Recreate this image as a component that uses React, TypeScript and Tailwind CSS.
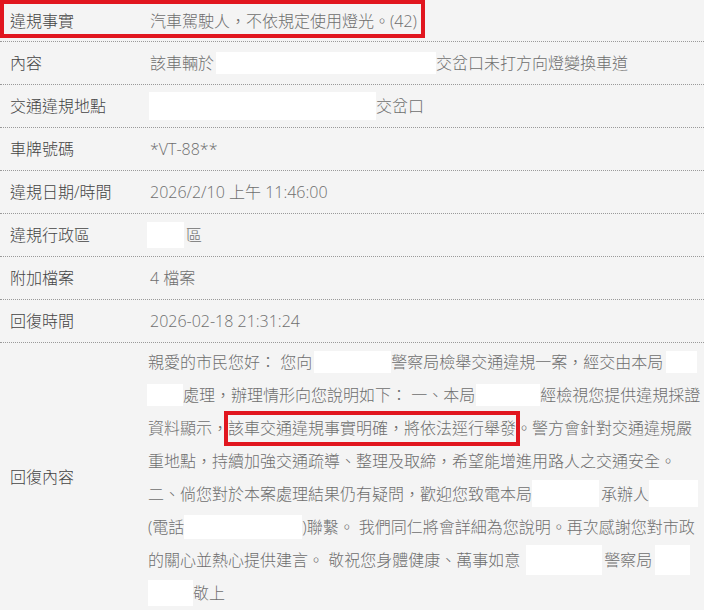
type Seg = string | { box: number; h?: number; ml?: number; mr?: number } | { mark: string };

const rows: { label: string; value: Seg[] }[] = [
  { label: "內容", value: ["該車輛於", { box: 220, h: 22, ml: 2 }, "交岔口未打方向燈變換車道"] },
  { label: "交通違規地點", value: [{ box: 227, h: 28, ml: -1 }, "交岔口"] },
  { label: "車牌號碼", value: ["*VT-88**"] },
  { label: "違規日期/時間", value: ["2026/2/10 上午 11:46:00"] },
  { label: "違規行政區", value: [{ box: 37, h: 26, ml: -3, mr: 2 }, "區"] },
  { label: "附加檔案", value: ["4 檔案"] },
  { label: "回復時間", value: ["2026-02-18 21:31:24"] },
];

const reply: Seg[][] = [
  ["親愛的市民您好： 您向", { box: 77, h: 22, ml: 2 }, "警察局檢舉交通違規一案，經交由本局", { box: 31, h: 22, ml: 3 }],
  [{ box: 36, h: 22, ml: -1 }, "處理，辦理情形向您說明如下： 一、本局", { box: 64, h: 22, ml: 1 }, "經檢視您提供違規採證"],
  ["資料顯示，", { mark: "該車交通違規事實明確，將依法逕行舉發" }, "。警方會針對交通違規嚴"],
  ["重地點，持續加強交通疏導、整理及取締，希望能增進用路人之交通安全。"],
  ["二、倘您對於本案處理結果仍有疑問，歡迎您致電本局", { box: 67, h: 27, mr: 2 }, "承辦人", { box: 49, h: 27 }],
  ["(電話", { box: 118, h: 24 }, ")聯繫。 我們同仁將會詳細為您說明。再次感謝您對市政"],
  ["的關心並熱心提供建言。 敬祝您身體健康、萬事如意；", { box: 76, h: 30, ml: -10, mr: 2 }, "警察局", { box: 35, h: 30, ml: 3 }],
  [{ box: 45, h: 26 }, "敬上"],
];

function Segs({ segs }: { segs: Seg[] }) {
  return (
    <>
      {segs.map((s, i) => {
        if (typeof s === "string") return <span key={i}>{s}</span>;
        if ("mark" in s)
          return (
            <span key={i} className="relative">
              {s.mark}
              <span className="absolute -left-[4px] -right-[4px] -top-[5px] -bottom-[6px] border-4 border-[#e1161f]" />
            </span>
          );
        return (
          <span
            key={i}
            className="inline-block shrink-0 bg-white"
            style={{ width: s.box, height: s.h ?? 24, marginLeft: s.ml ?? 0, marginRight: s.mr ?? 0 }}
          />
        );
      })}
    </>
  );
}

export default function App() {
  return (
    <main className="min-h-screen w-[704px] overflow-hidden bg-[#f4f4f4] font-['Open_Sans','Noto_Sans_CJK_TC',sans-serif] text-[16px] font-light text-[#6e6e6e]">
      <div className="relative flex h-[42px] items-center border-b border-dotted border-[#9a9a9a]">
        <div className="w-[148px] shrink-0 pl-[10px] text-[#444]">違規事實</div>
        <div className="whitespace-nowrap pl-[2px]">汽車駕駛人，不依規定使用燈光。(42)</div>
        <div className="absolute left-0 top-0 h-[38px] w-[425px] border-4 border-[#e1161f]" />
      </div>

      {rows.map((r) => (
        <div key={r.label} className="flex h-[43px] items-center border-b border-dotted border-[#9a9a9a]">
          <div className="w-[148px] shrink-0 pl-[10px] text-[#444]">{r.label}</div>
          <div className="flex items-center whitespace-nowrap pl-[2px]">
            <Segs segs={r.value} />
          </div>
        </div>
      ))}

      <div className="flex pt-[2px]">
        <div className="flex w-[148px] shrink-0 items-center pl-[10px] text-[#444]">回復內容</div>
        <div className="flex-1">
          {reply.map((line, i) => (
            <div key={i} className="flex h-[33px] items-center whitespace-nowrap">
              <Segs segs={line} />
            </div>
          ))}
        </div>
      </div>
    </main>
  );
}
